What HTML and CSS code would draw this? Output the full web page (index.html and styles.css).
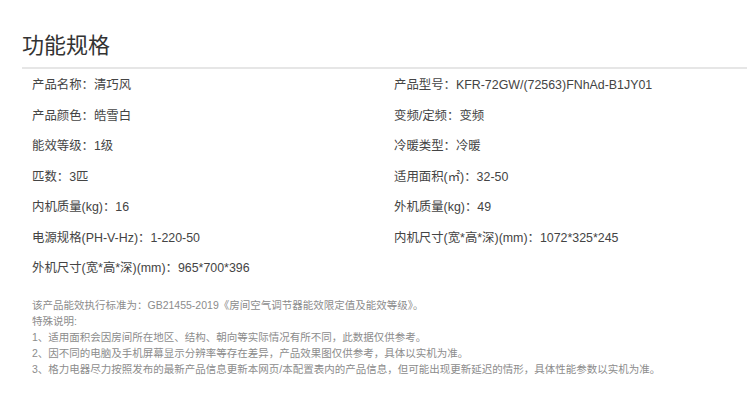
FILE: index.html
```html
<!DOCTYPE html>
<html lang="zh-CN">
<head>
    <meta charset="UTF-8">
    <title>功能规格</title>
    <link rel="stylesheet" href="styles.css">
</head>
<body>
    <div class="spec">
        <h2 class="spec-title">功能规格</h2>
        <ul class="spec-list">
            <li>产品名称：清巧风</li>
            <li>产品型号：KFR-72GW/(72563)FNhAd-B1JY01</li>
            <li>产品颜色：皓雪白</li>
            <li>变频/定频：变频</li>
            <li>能效等级：1级</li>
            <li>冷暖类型：冷暖</li>
            <li>匹数：3匹</li>
            <li>适用面积(㎡)：32-50</li>
            <li>内机质量(kg)：16</li>
            <li>外机质量(kg)：49</li>
            <li>电源规格(PH-V-Hz)：1-220-50</li>
            <li>内机尺寸(宽*高*深)(mm)：1072*325*245</li>
            <li>外机尺寸(宽*高*深)(mm)：965*700*396</li>
        </ul>
        <div class="spec-note">
            <p>该产品能效执行标准为：GB21455-2019《房间空气调节器能效限定值及能效等级》。</p>
            <p>特殊说明:</p>
            <p>1、适用面积会因房间所在地区、结构、朝向等实际情况有所不同，此数据仅供参考。</p>
            <p>2、因不同的电脑及手机屏幕显示分辨率等存在差异，产品效果图仅供参考，具体以实机为准。</p>
            <p>3、格力电器尽力按照发布的最新产品信息更新本网页/本配置表内的产品信息，但可能出现更新延迟的情形，具体性能参数以实机为准。</p>
        </div>
    </div>
</body>
</html>
```

FILE: styles.css
```css
body {
    margin: 0;
    background: #fff;
    font-family: "Liberation Sans", "Noto Sans CJK SC", sans-serif;
}

.spec {
    margin-left: 22px;
    width: 725px;
    padding-top: 30px;
}

.spec-title {
    margin: 0;
    font-size: 22px;
    font-weight: normal;
    color: #333;
    line-height: 32px;
    padding-bottom: 5px;
    border-bottom: 2px solid #e6e6e6;
}

.spec-list {
    list-style: none;
    margin: 0;
    padding: 0 0 0 10px;
    display: grid;
    grid-template-columns: 362px 1fr;
    grid-auto-rows: 30.5px;
    align-items: center;
}

.spec-list li {
    font-size: 12.4px;
    color: #444;
}

.spec-note {
    margin-top: 14px;
    padding-left: 10px;
    font-size: 10.5px;
    line-height: 16px;
    color: #8c8c8c;
}

.spec-note p {
    margin: 0;
}
```
